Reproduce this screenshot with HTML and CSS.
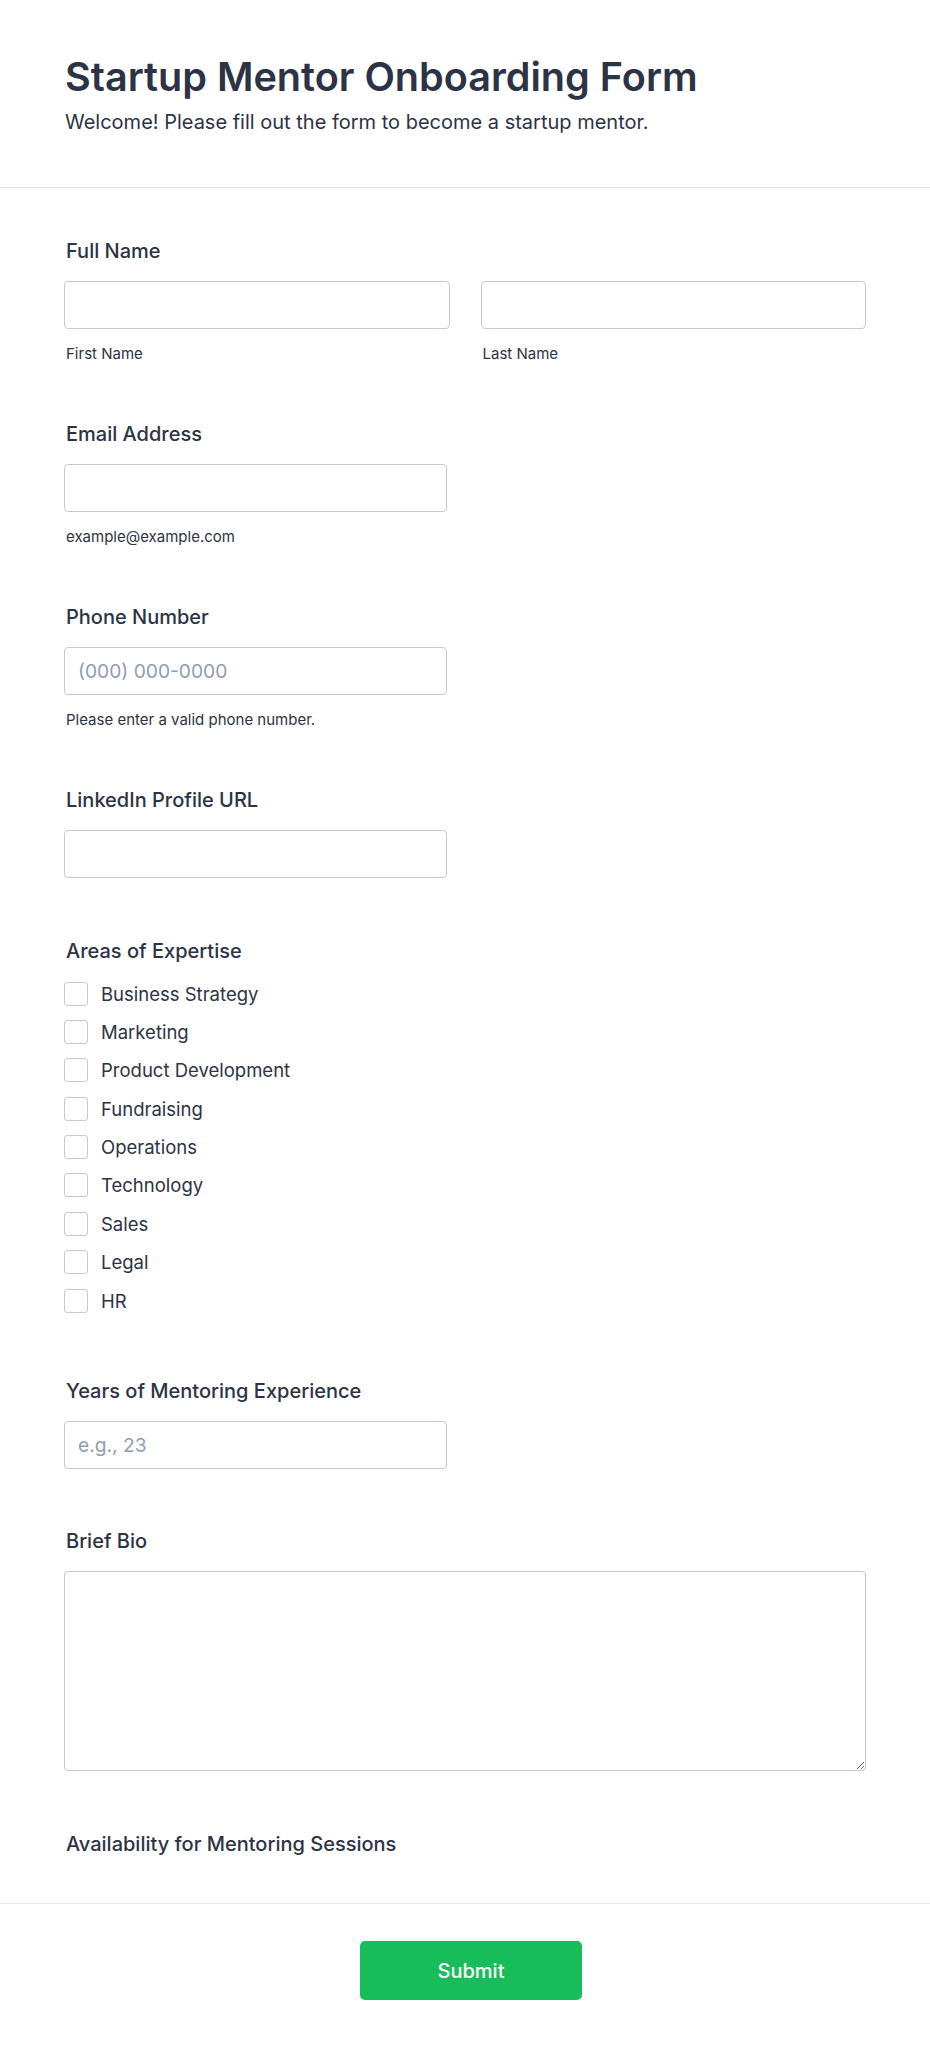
FILE: index.html
```html
<!DOCTYPE html>
<html lang="en">
<head>
<meta charset="utf-8">
<title>Startup Mentor Onboarding Form</title>
<link rel="stylesheet" href="styles.css">
</head>
<body>
<header class="header">
  <div class="wrap">
    <h1 class="title">Startup Mentor Onboarding Form</h1>
    <p class="subtitle">Welcome! Please fill out the form to become a startup mentor.</p>
  </div>
</header>

<main class="form">
  <div class="wrap fields">
    <div class="field">
      <label class="label">Full Name</label>
      <div class="two-col">
        <div class="col">
          <input class="input" type="text">
          <span class="sub">First Name</span>
        </div>
        <div class="col">
          <input class="input" type="text">
          <span class="sub">Last Name</span>
        </div>
      </div>
    </div>

    <div class="field">
      <label class="label">Email Address</label>
      <div class="half col">
        <input class="input" type="email">
        <span class="sub">example@example.com</span>
      </div>
    </div>

    <div class="field">
      <label class="label">Phone Number</label>
      <div class="half col">
        <input class="input" type="tel" placeholder="(000) 000-0000">
        <span class="sub">Please enter a valid phone number.</span>
      </div>
    </div>

    <div class="field nohelp">
      <label class="label">LinkedIn Profile URL</label>
      <div class="half col">
        <input class="input" type="url">
      </div>
    </div>

    <div class="field checks-field">
      <label class="label">Areas of Expertise</label>
      <div class="checks">
        <label class="check"><span class="box"></span><span>Business Strategy</span></label>
        <label class="check"><span class="box"></span><span>Marketing</span></label>
        <label class="check"><span class="box"></span><span>Product Development</span></label>
        <label class="check"><span class="box"></span><span>Fundraising</span></label>
        <label class="check"><span class="box"></span><span>Operations</span></label>
        <label class="check"><span class="box"></span><span>Technology</span></label>
        <label class="check"><span class="box"></span><span>Sales</span></label>
        <label class="check"><span class="box"></span><span>Legal</span></label>
        <label class="check"><span class="box"></span><span>HR</span></label>
      </div>
    </div>

    <div class="field nohelp">
      <label class="label">Years of Mentoring Experience</label>
      <div class="half col">
        <input class="input" type="text" placeholder="e.g., 23">
      </div>
    </div>

    <div class="field nohelp">
      <label class="label">Brief Bio</label>
      <textarea class="textarea"></textarea>
    </div>

    <div class="field last">
      <label class="label">Availability for Mentoring Sessions</label>
    </div>
  </div>
</main>

<footer class="footer">
  <button class="submit" type="button">Submit</button>
</footer>
</body>
</html>
```

FILE: styles.css
```css
* { box-sizing: border-box; }

html, body {
  margin: 0;
  padding: 0;
  background: #ffffff;
}

body {
  font-family: Inter, "Noto Sans", "Liberation Sans", sans-serif;
  color: #2c3345;
}

.wrap {
  width: 802px;
  margin: 0 auto;
}

.header {
  padding: 53px 0 53px;
  border-bottom: 1px solid #dde2ea;
}

.title {
  margin: 0;
  font-size: 39.6px;
  line-height: 48px;
  font-weight: 600;
  color: #2c3345;
  padding-left: 1px;
}

.subtitle {
  margin: 9px 0 0;
  font-size: 20px;
  line-height: 24px;
  font-weight: 400;
  color: #2c3345;
  padding-left: 1px;
}

.form {
  padding-top: 51px;
}

.fields {
  display: flex;
  flex-direction: column;
}

.field {
  display: flex;
  flex-direction: column;
  margin-bottom: 58.5px;
}

.field.nohelp {
  margin-bottom: 60.5px;
}

.field.checks-field {
  margin-bottom: 66px;
}

.field.last {
  margin-bottom: 47.5px;
}

.label {
  display: block;
  font-size: 20px;
  line-height: 24px;
  font-weight: 500;
  color: #2c3345;
  margin-bottom: 18px;
  padding-left: 2px;
}

.field.last .label {
  margin-bottom: 0;
}

.two-col {
  display: grid;
  grid-template-columns: 1fr 1fr;
  column-gap: 31px;
}

.half {
  width: 383px;
}

.col {
  display: flex;
  flex-direction: column;
}

.input {
  display: block;
  width: 100%;
  height: 48px;
  margin: 0;
  padding: 0 13px;
  border: 1px solid #c3c9d6;
  border-radius: 4px;
  background: #fff;
  font-family: Inter, "Noto Sans", sans-serif;
  font-size: 19.2px;
  color: #2c3345;
  outline: none;
}

.input::placeholder {
  color: #8f9db2;
  opacity: 1;
}

.sub {
  display: block;
  margin-top: 14.5px;
  font-size: 15px;
  line-height: 20px;
  color: #2c3345;
  padding-left: 2px;
}

.checks {
  display: flex;
  flex-direction: column;
  gap: 14.4px;
  margin-top: 1px;
}

.check {
  display: flex;
  align-items: center;
  gap: 13px;
  height: 24px;
  font-size: 18.5px;
  line-height: 24px;
  color: #2c3345;
}

.box {
  flex: none;
  width: 24px;
  height: 24px;
  border: 1px solid #c3c9d6;
  border-radius: 3px;
  background: #fff;
}

.textarea {
  display: block;
  width: 100%;
  height: 200px;
  margin: 0;
  padding: 12px;
  border: 1px solid #c3c9d6;
  border-radius: 4px;
  background: #fff;
  font-family: Inter, sans-serif;
  font-size: 18px;
  resize: both;
  outline: none;
}

.footer {
  border-top: 1px solid #e6e9ee;
  padding: 37px 0 50px 12px;
  display: flex;
  justify-content: center;
}

.submit {
  width: 222px;
  height: 59px;
  border: none;
  border-radius: 5px;
  background: #18bd5b;
  color: #ffffff;
  font-family: Inter, sans-serif;
  font-size: 20px;
  font-weight: 500;
  cursor: pointer;
}
```
